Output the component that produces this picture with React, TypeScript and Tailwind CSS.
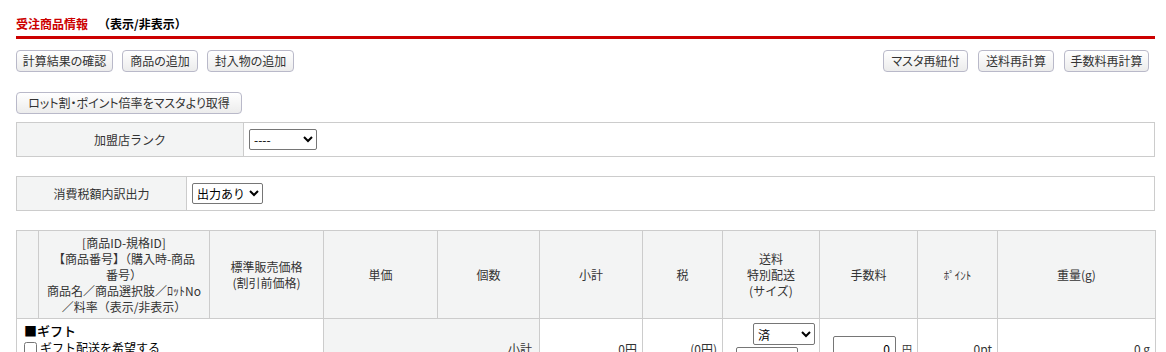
import React from "react";

const font = { fontFamily: '"Noto Sans CJK JP", "Noto Sans", sans-serif' };

function Btn({ children, w }: { children: React.ReactNode; w: string }) {
  return (
    <button
      className={`h-[22px] ${w} shrink-0 rounded-[4px] border border-[#b9b9c9] bg-gradient-to-b from-[#ffffff] to-[#ececec] text-[12px] leading-[20px] text-[#333] text-center whitespace-nowrap [font-feature-settings:'palt']`}
    >
      {children}
    </button>
  );
}

export default function App() {
  return (
    <div className="bg-white w-[1166px] h-[352px] overflow-hidden text-[#333]" style={font}>
      <div className="ml-[16px] w-[1139px]">
        <div className="pt-[16px] h-[32px] flex text-[12px] leading-[16px] font-bold">
          <span className="text-[#cc0000]">受注商品情報</span>
          <span className="ml-[10px] text-black">（表示/非表示）</span>
        </div>
        <div className="mt-[4px] h-[3px] bg-[#cc0000]" />
        <div className="mt-[11px] flex justify-between pr-[6px]">
          <div className="flex gap-[9px]">
            <Btn w="w-[97px]">計算結果の確認</Btn>
            <Btn w="w-[76px]">商品の追加</Btn>
            <Btn w="w-[87px]">封入物の追加</Btn>
          </div>
          <div className="flex gap-[10px]">
            <Btn w="w-[85px]">マスタ再紐付</Btn>
            <Btn w="w-[76px]">送料再計算</Btn>
            <Btn w="w-[85px]">手数料再計算</Btn>
          </div>
        </div>
        <div className="mt-[20px] flex">
          <Btn w="w-[226px]">ロット割・ポイント倍率をマスタより取得</Btn>
        </div>

        <div className="mt-[8px] flex h-[35px] border border-[#cccccc] text-[12px]">
          <div className="w-[227px] bg-[#f3f4f4] border-r border-[#cccccc] flex items-center justify-center">
            加盟店ランク
          </div>
          <div className="flex items-center pl-[5px]">
            <select className="w-[68px] h-[21px] text-[12px] border border-[#767676] rounded-[2px] bg-white text-black">
              <option>----</option>
            </select>
          </div>
        </div>

        <div className="mt-[19px] flex h-[35px] border border-[#cccccc] text-[12px]">
          <div className="w-[170px] bg-[#f3f4f4] border-r border-[#cccccc] flex items-center justify-center">
            消費税額内訳出力
          </div>
          <div className="flex items-center pl-[5px]">
            <select className="w-[71px] h-[21px] text-[12px] border border-[#767676] rounded-[2px] bg-white text-black">
              <option>出力あり</option>
            </select>
          </div>
        </div>

        <table className="mt-[19px] w-[1139px] table-fixed border-collapse text-[12px] leading-[16px]">
          <colgroup>
            <col className="w-[22px]" />
            <col className="w-[171px]" />
            <col className="w-[114px]" />
            <col className="w-[114px]" />
            <col className="w-[102px]" />
            <col className="w-[103px]" />
            <col className="w-[80px]" />
            <col className="w-[97px]" />
            <col className="w-[98px]" />
            <col className="w-[80px]" />
            <col className="w-[158px]" />
          </colgroup>
          <thead>
            <tr className="h-[88px] bg-[#f3f4f4]">
              <th className="border border-[#cccccc] font-normal"></th>
              <th className="border border-[#cccccc] font-normal text-center px-[2px]">
                <div>[商品ID-規格ID]</div>
                <div>【商品番号】（購入時-商品</div>
                <div>番号）</div>
                <div>商品名／商品選択肢／ﾛｯﾄNo</div>
                <div>／料率（表示/非表示）</div>
              </th>
              <th className="border border-[#cccccc] font-normal text-center">
                <div>標準販売価格</div>
                <div>(割引前価格)</div>
              </th>
              <th className="border border-[#cccccc] font-normal text-center">単価</th>
              <th className="border border-[#cccccc] font-normal text-center">個数</th>
              <th className="border border-[#cccccc] font-normal text-center">小計</th>
              <th className="border border-[#cccccc] font-normal text-center">税</th>
              <th className="border border-[#cccccc] font-normal text-center">
                <div>送料</div>
                <div>特別配送</div>
                <div>(サイズ)</div>
              </th>
              <th className="border border-[#cccccc] font-normal text-center">手数料</th>
              <th className="border border-[#cccccc] font-normal text-center text-[11px]">ﾎﾟｲﾝﾄ</th>
              <th className="border border-[#cccccc] font-normal text-center">重量(g)</th>
            </tr>
          </thead>
          <tbody>
            <tr className="h-[60px]">
              <td colSpan={3} className="border border-[#cccccc] align-top pl-[7px] pt-[3px]">
                <div className="text-[13px] leading-[18px] text-black font-medium">■ギフト</div>
                <label className="flex items-center gap-[3px] text-black">
                  <input type="checkbox" className="m-0 w-[13px] h-[13px]" />
                  <span>ギフト配送を希望する</span>
                </label>
              </td>
              <td colSpan={2} className="border border-[#cccccc] bg-[#f3f4f4] text-right pr-[7px]">小計</td>
              <td className="border border-[#cccccc] text-right pr-[5px]">0円</td>
              <td className="border border-[#cccccc] text-right pr-[5px]">(0円)</td>
              <td className="border border-[#cccccc] text-right pr-[4px] align-top pt-[4px]">
                <div className="flex flex-col items-end gap-[2px]">
                  <select className="w-[62px] h-[22px] text-[12px] border border-[#767676] rounded-[2px] bg-white text-black">
                    <option>済</option>
                  </select>
                  <input className="w-[62px] h-[22px] border border-[#767676] rounded-[2px] mr-[17px]" />
                </div>
              </td>
              <td className="border border-[#cccccc] pl-[13px]">
                <div className="flex items-center">
                  <input
                    defaultValue="0"
                    className="w-[63px] h-[26px] border border-[#767676] rounded-[2px] text-right pr-[5px] text-[12px] text-black"
                  />
                  <span className="ml-[6px] text-[10px]">円</span>
                </div>
              </td>
              <td className="border border-[#cccccc] text-right pr-[5px]">0pt</td>
              <td className="border border-[#cccccc] text-right pr-[5px]">0 g</td>
            </tr>
          </tbody>
        </table>
      </div>
    </div>
  );
}
